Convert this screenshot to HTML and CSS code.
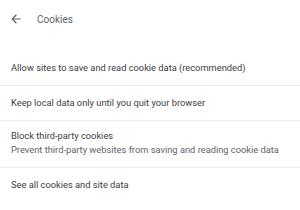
FILE: index.html
```html
<!DOCTYPE html>
<html lang="en">
<head>
    <meta charset="UTF-8">
    <title>Cookies</title>
    <link rel="stylesheet" href="styles.css">
</head>
<body>
    <div class="header">
        <button class="back-button" aria-label="Back">
            <svg width="14" height="14" viewBox="0 0 24 24"><path d="M20 11H7.83l5.59-5.59L12 4l-8 8 8 8 1.41-1.41L7.83 13H20v-2z" fill="#5f6368"/></svg>
        </button>
        <h1>Cookies</h1>
    </div>

    <div class="settings-list">
        <div class="row">Allow sites to save and read cookie data (recommended)</div>
        <div class="row">Keep local data only until you quit your browser</div>
        <div class="row tall">
            <div>Block third-party cookies</div>
            <div class="secondary">Prevent third-party websites from saving and reading cookie data</div>
        </div>
        <div class="row">See all cookies and site data</div>
    </div>
</body>
</html>
```

FILE: styles.css
```css
body {
    margin: 0;
    background: white;
    font-family: Roboto, 'Liberation Sans', sans-serif;
    font-size: 9.3px;
    color: #3c4043;
}

.header {
    display: flex;
    align-items: center;
    height: 38px;
    padding-left: 9px;
}

.back-button {
    background: none;
    border: none;
    padding: 0;
    width: 14px;
    height: 14px;
    display: flex;
    align-items: center;
    justify-content: center;
}

.header h1 {
    margin: 0 0 0 14px;
    font-size: 10px;
    font-weight: 400;
    color: #5f6368;
}

.settings-list {
    margin-top: 12px;
}

.row {
    box-sizing: border-box;
    display: flex;
    flex-direction: column;
    justify-content: center;
    min-height: 35px;
    padding: 0 11px;
    line-height: 16px;
}

.row + .row {
    border-top: 1px solid #ebebeb;
}

.row.tall {
    padding-top: 8px;
    padding-bottom: 10px;
    line-height: 14px;
}

.secondary {
    color: #5f6368;
}
```
